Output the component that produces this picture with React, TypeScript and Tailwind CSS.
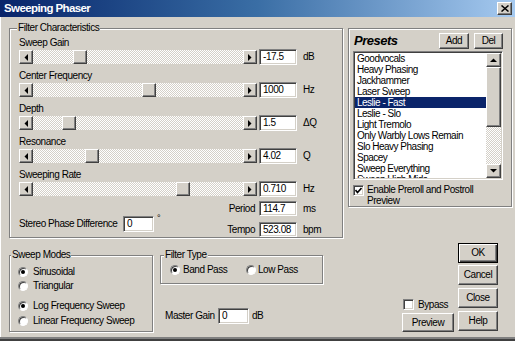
import type { FC, ReactNode } from "react"

const face = "font-['Liberation_Sans',Arial,sans-serif]"

const raised =
  "bg-[#d4d0c8] border border-t-white border-l-white border-r-[#404040] border-b-[#404040] shadow-[inset_-1px_-1px_0_#808080]"
const sunken =
  "border border-t-[#808080] border-l-[#808080] border-r-white border-b-white shadow-[inset_1px_1px_0_#404040,inset_-1px_-1px_0_#d4d0c8]"
const etched = "border border-[#808080] shadow-[inset_1px_1px_0_#fff,1px_1px_0_#fff]"
const dither =
  "bg-[conic-gradient(#fff_25%,#d4d0c8_0_50%,#fff_0_75%,#d4d0c8_0)] bg-[length:2px_2px]"

type Dir = "left" | "right" | "up" | "down"

const arrowPoints: Record<Dir, string> = {
  left: "4,0 4,7 0.5,3.5",
  right: "0,0 0,7 3.5,3.5",
  up: "0,4 7,4 3.5,0.5",
  down: "0,0 7,0 3.5,3.5",
}

const Arrow: FC<{ dir: Dir }> = ({ dir }) => {
  const flat = dir === "up" || dir === "down"
  return (
    <svg width={flat ? 7 : 4} height={flat ? 4 : 7} viewBox={flat ? "0 0 7 4" : "0 0 4 7"}>
      <polygon points={arrowPoints[dir]} fill="#000" />
    </svg>
  )
}

const Slider: FC<{ pos: number }> = ({ pos }) => (
  <div className={`flex w-[238px] h-[14px] ${dither}`}>
    <div className={`${raised} w-[14px] h-[14px] flex items-center justify-center`}>
      <Arrow dir="left" />
    </div>
    <div className="relative flex-1">
      <div className={`${raised} absolute top-0 w-[14px] h-[14px]`} style={{ left: pos }} />
    </div>
    <div className={`${raised} w-[14px] h-[14px] flex items-center justify-center`}>
      <Arrow dir="right" />
    </div>
  </div>
)

const Field: FC<{ value: string; className?: string }> = ({ value, className = "" }) => (
  <div className={`${sunken} bg-white flex items-center pl-[3px] ${className}`}>{value}</div>
)

const Radio: FC<{ on?: boolean }> = ({ on }) => (
  <span className="w-[10px] h-[10px] shrink-0 rounded-full bg-white border border-t-[#808080] border-l-[#808080] border-r-white border-b-white shadow-[inset_1px_1px_0_#404040] flex items-center justify-center">
    {on ? <span className="w-[4px] h-[4px] rounded-full bg-black" /> : null}
  </span>
)

const Check: FC<{ on?: boolean }> = ({ on }) => (
  <span className={`${sunken} bg-white w-[11px] h-[11px] shrink-0 flex items-center justify-center`}>
    {on ? (
      <svg width="7" height="7" viewBox="0 0 7 7">
        <path d="M0.5 3 L2.5 5.5 L6.5 1" stroke="#000" strokeWidth="1.6" fill="none" />
      </svg>
    ) : null}
  </span>
)

const Button: FC<{ children: ReactNode; className?: string; primary?: boolean }> = ({
  children,
  className = "",
  primary,
}) => (
  <div
    className={`flex items-center justify-center bg-[#d4d0c8] ${
      primary
        ? "border border-black shadow-[inset_1px_1px_0_#fff,inset_-1px_-1px_0_#404040,inset_-2px_-2px_0_#808080]"
        : raised
    } ${className}`}
  >
    {children}
  </div>
)

const Group: FC<{ title: string; labelClass: string; className?: string; children: ReactNode }> = ({
  title,
  labelClass,
  className = "",
  children,
}) => (
  <div className={`relative ${etched} ${className}`}>
    <span className={`absolute -top-[7px] px-[1px] bg-[#d4d0c8] leading-[12px] whitespace-nowrap ${labelClass}`}>
      {title}
    </span>
    {children}
  </div>
)

const sliders = [
  { label: "Sweep Gain", pos: 40, value: "-17.5", unit: "dB" },
  { label: "Center Frequency", pos: 109, value: "1000", unit: "Hz" },
  { label: "Depth", pos: 29, value: "1.5", unit: "ΔQ" },
  { label: "Resonance", pos: 52, value: "4.02", unit: "Q" },
  { label: "Sweeping Rate", pos: 143, value: "0.710", unit: "Hz" },
]

const presets = [
  "Goodvocals",
  "Heavy Phasing",
  "Jackhammer",
  "Laser Sweep",
  "Leslie - Fast",
  "Leslie - Slo",
  "Light Tremolo",
  "Only Warbly Lows Remain",
  "Slo Heavy Phasing",
  "Spacey",
  "Sweep Everything",
  "Sweep High Mids",
]

const TitleBar = () => (
  <div className="h-[17px] shrink-0 flex items-center pl-[4px] pr-[3px] bg-linear-to-r from-[#0a246a] via-[#3a6ea5] to-[#a6caf0]">
    <span className="text-white font-bold text-[11.5px] tracking-[-0.6px] leading-none">Sweeping Phaser</span>
    <div className={`${raised} ml-auto w-[15px] h-[13px] flex items-center justify-center`}>
      <svg width="8" height="7" viewBox="0 0 8 7">
        <path d="M0.5 0.5 L7.5 6.5 M7.5 0.5 L0.5 6.5" stroke="#000" strokeWidth="1.5" />
      </svg>
    </div>
  </div>
)

const TimeRow: FC<{ label: string; value: string; unit: string }> = ({ label, value, unit }) => (
  <div className="flex items-center justify-end h-[15px]">
    <span>{label}</span>
    <Field value={value} className="w-[38px] h-[15px] ml-[4px]" />
    <span className="w-[30px] ml-[6px]">{unit}</span>
  </div>
)

const FilterCharacteristics = () => (
  <Group
    title="Filter Characteristics"
    labelClass="left-[7px]"
    className="w-[334px] h-[210px] flex flex-col pl-[9px] pr-[9px] pt-[8px]"
  >
    {sliders.map((s, i) => (
      <div key={s.label}>
        <div className="h-[12px] leading-[12px]">{s.label}</div>
        <div className={`flex items-center h-[16px] ${i < sliders.length - 1 ? "mb-[5px]" : ""}`}>
          <Slider pos={s.pos} />
          <Field value={s.value} className="w-[38px] h-[16px] ml-[2px]" />
          <span className="w-[30px] ml-[6px]">{s.unit}</span>
        </div>
      </div>
    ))}
    <div className="flex items-end mt-[4px]">
      <div className="flex items-center mb-[5px]">
        <span className="w-[98px] whitespace-nowrap">Stereo Phase Difference</span>
        <Field value="0" className="w-[31px] h-[16px] ml-[6px]" />
        <span className="self-start -mt-[4px] ml-[3px] text-[9px]">°</span>
      </div>
      <div className="ml-auto flex flex-col gap-[6px]">
        <TimeRow label="Period" value="114.7" unit="ms" />
        <TimeRow label="Tempo" value="523.08" unit="bpm" />
      </div>
    </div>
  </Group>
)

const Presets = () => (
  <div className={`${etched} ml-[5px] w-[164px] h-[179px] flex flex-col pl-[4px] pr-[8px] pt-[4px]`}>
    <div className="flex items-center h-[16px]">
      <span className="text-[13px] font-bold italic tracking-[-0.5px] pl-[1px]">Presets</span>
      <Button className="ml-auto w-[30px] h-[16px]">Add</Button>
      <Button className="ml-[5px] w-[29px] h-[16px]">Del</Button>
    </div>
    <div className={`${sunken} bg-white mt-[2px] w-[150px] h-[129px] p-[1px] flex`}>
      <div className="flex-1 overflow-hidden tracking-[-0.5px]">
        {presets.map((p) => (
          <div
            key={p}
            className={`h-[11px] leading-[11px] px-[2px] whitespace-nowrap ${
              p === "Leslie - Fast" ? "bg-[#0a246a] text-white" : ""
            }`}
          >
            {p}
          </div>
        ))}
      </div>
      <div className={`w-[15px] flex flex-col ${dither}`}>
        <div className={`${raised} h-[14px] flex items-center justify-center`}>
          <Arrow dir="up" />
        </div>
        <div className={`${raised} h-[60px]`} />
        <div className="flex-1" />
        <div className={`${raised} h-[14px] flex items-center justify-center`}>
          <Arrow dir="down" />
        </div>
      </div>
    </div>
    <div className="flex items-start mt-[4px]">
      <span className="mt-[1px]">
        <Check on />
      </span>
      <span className="ml-[3px] leading-[11px] whitespace-nowrap">
        Enable Preroll and Postroll
        <br />
        Preview
      </span>
    </div>
  </div>
)

const BottomArea = () => (
  <div className="flex flex-1 pb-[9px] pl-[9px] whitespace-nowrap">
    <Group title="Sweep Modes" labelClass="left-[1px]" className="mt-[17px] w-[144px] h-[77px] pl-[8px] pt-[9px]">
      <div className="flex items-center h-[14px]">
        <Radio on />
        <span className="ml-[5px]">Sinusoidal</span>
      </div>
      <div className="flex items-center h-[14px]">
        <Radio />
        <span className="ml-[5px]">Triangular</span>
      </div>
      <div className="flex items-center h-[14px] mt-[6px]">
        <Radio on />
        <span className="ml-[5px]">Log Frequency Sweep</span>
      </div>
      <div className="flex items-center h-[14px] mt-[1px]">
        <Radio />
        <span className="ml-[5px]">Linear Frequency Sweep</span>
      </div>
    </Group>
    <div className="ml-[7px] w-[163px] mt-[17px] flex flex-col">
      <Group title="Filter Type" labelClass="left-[3px]" className="h-[29px] flex items-center pl-[9px] pt-[1px]">
        <div className="flex items-center w-[76px]">
          <Radio on />
          <span className="ml-[3px]">Band Pass</span>
        </div>
        <div className="flex items-center">
          <Radio />
          <span className="ml-[2px]">Low Pass</span>
        </div>
      </Group>
      <div className="flex items-center h-[16px] mt-[24px] pl-[5px]">
        <span className="w-[53px]">Master Gain</span>
        <Field value="0" className="w-[31px] h-[16px]" />
        <span className="ml-[3px]">dB</span>
      </div>
    </div>
    <div className="ml-[79px] w-[52px] flex flex-col justify-end">
      <div className="flex items-center h-[11px] ml-[1px]">
        <Check />
        <span className="ml-[4px]">Bypass</span>
      </div>
      <Button className="mt-[3px] h-[19px]">Preview</Button>
    </div>
    <div className="ml-[4px] w-[40px] flex flex-col">
      <Button primary className="mt-[5px] h-[20px]">
        OK
      </Button>
      <Button className="mt-[2px] h-[20px]">Cancel</Button>
      <Button className="mt-[3px] h-[20px]">Close</Button>
      <Button className="mt-[3px] h-[20px]">Help</Button>
    </div>
  </div>
)

export default function App() {
  return (
    <div
      className={`w-[515px] h-[341px] flex flex-col overflow-hidden bg-[#d4d0c8] text-black text-[10px] leading-[12px] tracking-[-0.45px] ${face} shadow-[inset_0_-2px_0_#404040,inset_0_-4px_0_#808080,inset_1px_0_0_#fff]`}
    >
      <TitleBar />
      <div className="flex pl-[9px] mt-[11px]">
        <FilterCharacteristics />
        <Presets />
      </div>
      <BottomArea />
    </div>
  )
}
